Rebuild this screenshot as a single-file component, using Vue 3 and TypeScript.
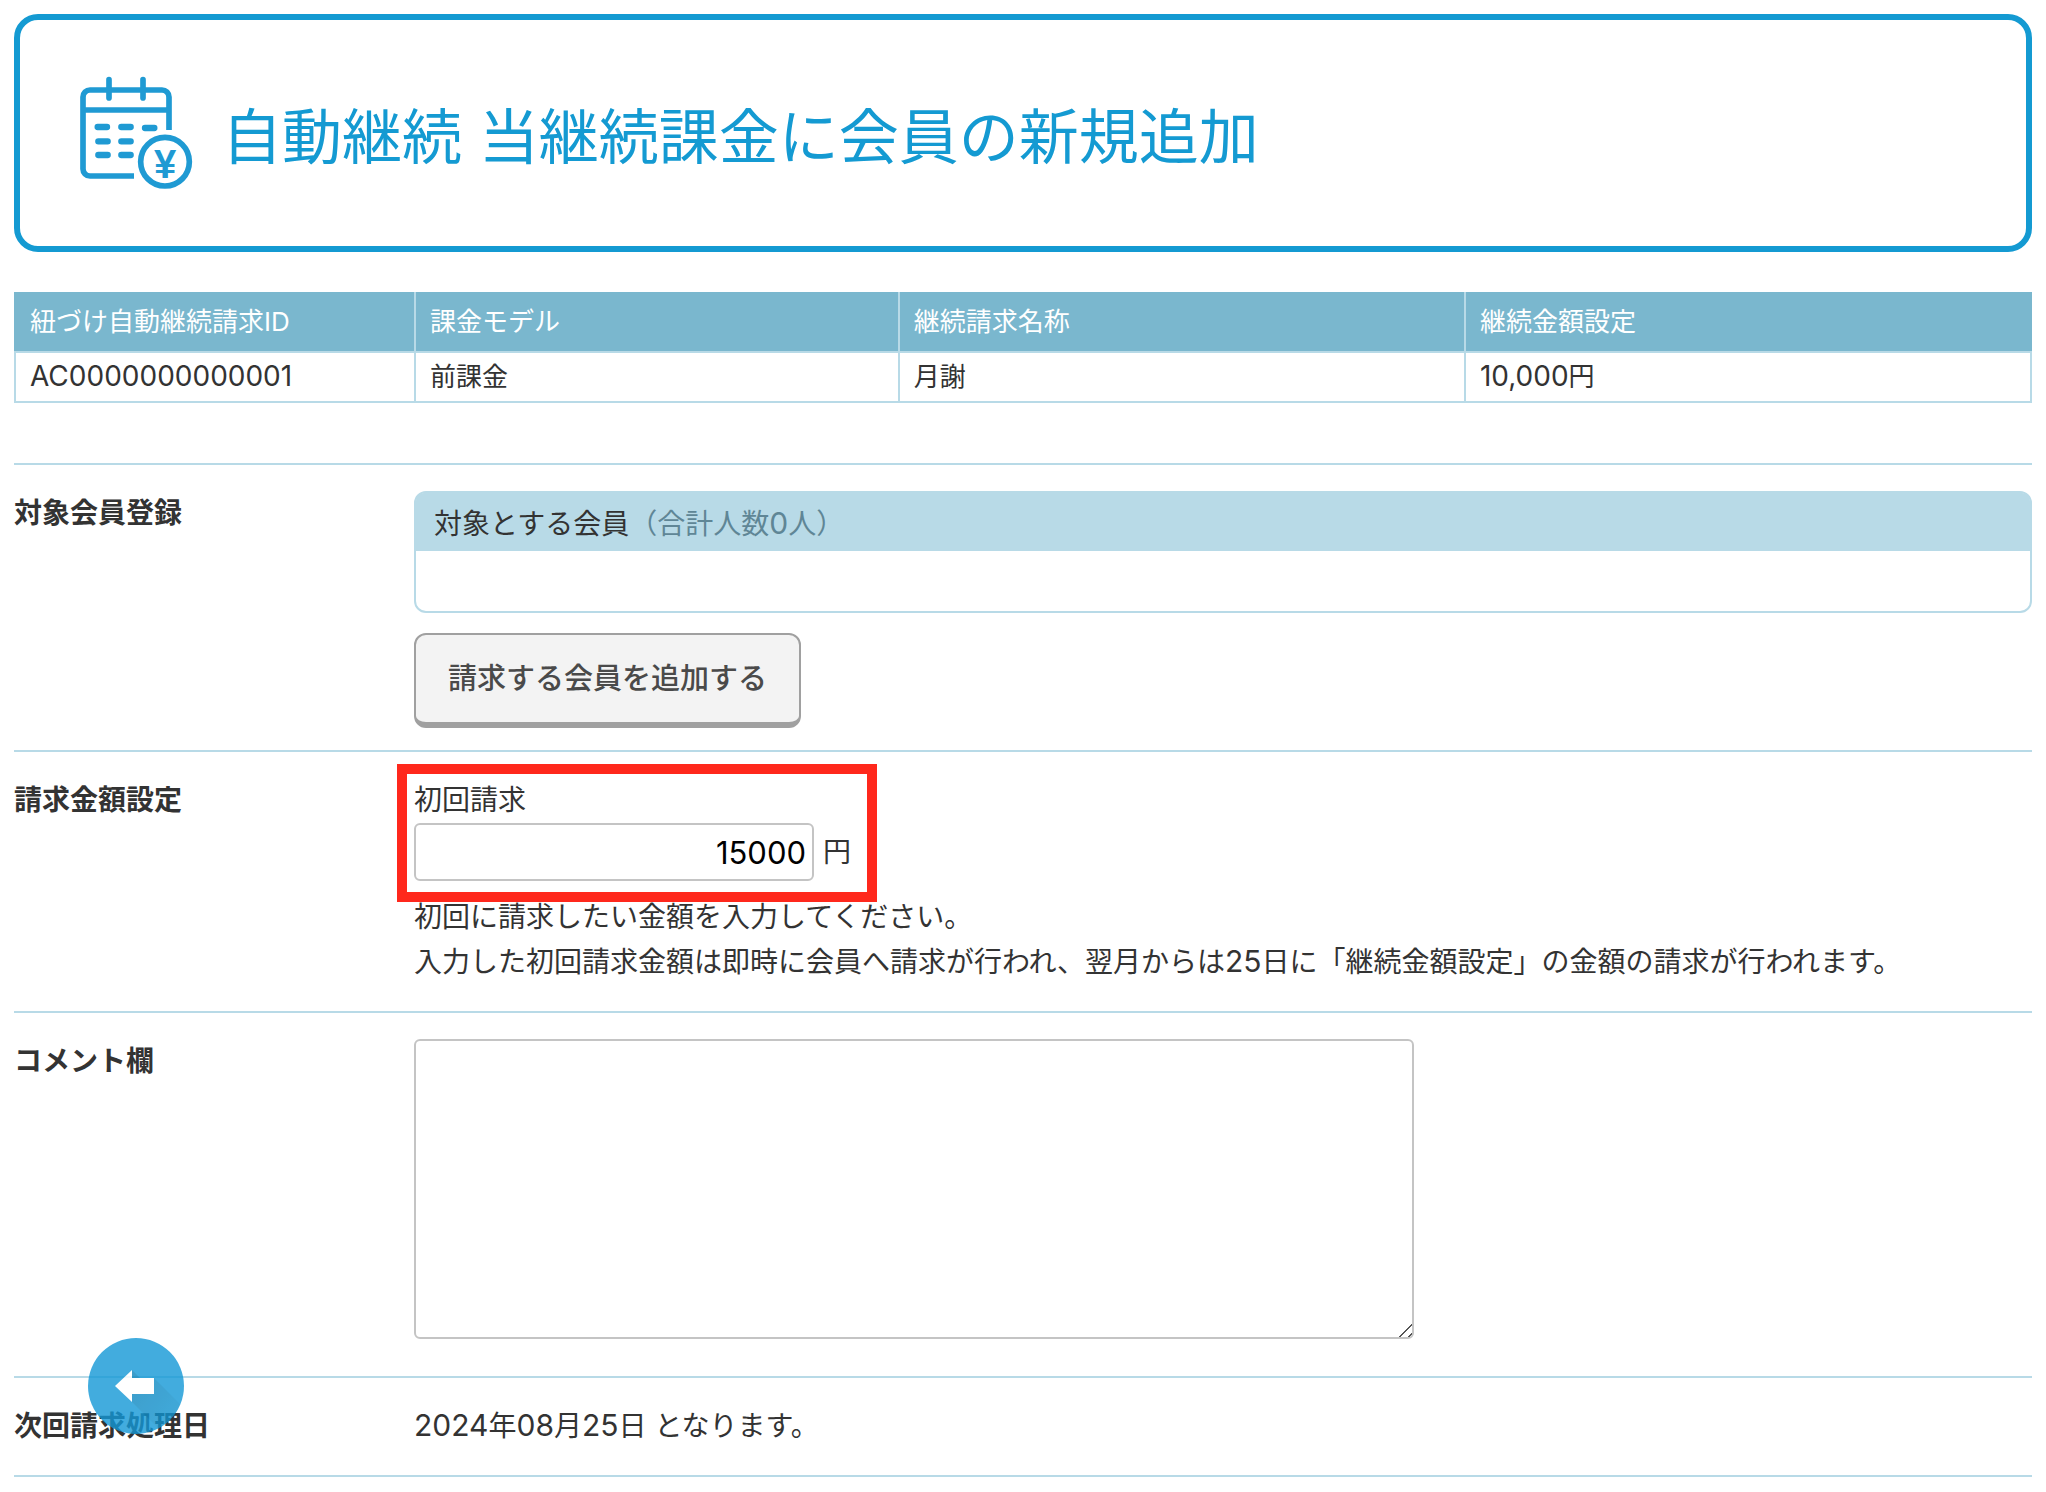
<script setup lang="ts">
import { ref } from 'vue'

interface Column {
  label: string
  number?: string
  text?: string
}

const columns: Column[] = [
  { label: '紐づけ自動継続請求ID', number: 'AC0000000000001' },
  { label: '課金モデル', text: '前課金' },
  { label: '継続請求名称', text: '月謝' },
  { label: '継続金額設定', number: '10,000', text: '円' },
]

const memberCount = ref(0)
const firstAmount = ref('15000')
const comment = ref('')
</script>

<template>
  <main class="page">
    <header class="title-box">
      <svg class="title-icon" viewBox="48 36 360 360" fill="none" stroke="#1f9ad3" stroke-width="17" aria-hidden="true">
        <path d="M327 207V108a21 21 0 0 0-21-21H90a21 21 0 0 0-21 21v216a21 21 0 0 0 21 21h132" />
        <path d="M69 147h258" />
        <path d="M147 56v55M249 56v55" stroke-linecap="round" />
        <path
          d="M113 198h28M184 198h28M255 201h28M115 241h28M184 241h28M115 282h28M184 282h28"
          stroke-width="19"
          stroke-linecap="round"
        />
        <circle cx="315" cy="302" r="73" />
        <text class="yen" x="315" y="352" text-anchor="middle">¥</text>
      </svg>
      <h1>自動継続 当継続課金に会員の新規追加</h1>
    </header>

    <table class="summary">
      <colgroup>
        <col class="col-id" />
        <col class="col-model" />
        <col />
        <col />
      </colgroup>
      <thead>
        <tr>
          <th v-for="c in columns" :key="c.label" scope="col">{{ c.label }}</th>
        </tr>
      </thead>
      <tbody>
        <tr>
          <td v-for="c in columns" :key="c.label"><span v-if="c.number" class="num">{{ c.number }}</span>{{ c.text }}</td>
        </tr>
      </tbody>
    </table>

    <form class="form" @submit.prevent>
      <section class="row row-members">
        <h2>対象会員登録</h2>
        <div class="field">
          <div class="panel">
            <p class="panel-head">対象とする会員<span class="count">（合計人数<span class="num">{{ memberCount }}</span>人）</span></p>
            <div class="panel-body"></div>
          </div>
          <button type="button" class="add">請求する会員を追加する</button>
        </div>
      </section>

      <section class="row">
        <h2>請求金額設定</h2>
        <div class="field">
          <div class="first-bill">
            <label for="first-amount">初回請求</label>
            <div class="amount">
              <input id="first-amount" v-model="firstAmount" type="text" inputmode="numeric" />
              <span>円</span>
            </div>
          </div>
          <p>
            初回に請求したい金額を入力してください。<br />
            入力した初回請求金額は即時に会員へ請求が行われ、翌月からは<span class="num">25</span>日に「継続金額設定」の金額の請求が行われます。
          </p>
        </div>
      </section>

      <section class="row row-comment">
        <h2><label for="comment">コメント欄</label></h2>
        <div class="field">
          <textarea id="comment" v-model="comment"></textarea>
        </div>
      </section>

      <section class="row">
        <h2>次回請求処理日</h2>
        <div class="field">
          <p><span class="num">2024</span>年<span class="num">08</span>月<span class="num">25</span>日 となります。</p>
        </div>
      </section>
    </form>

    <a href="#" class="back" aria-label="戻る">
      <svg viewBox="0 0 96 96" aria-hidden="true">
        <defs>
          <linearGradient id="back-shadow" x1="0" y1="0" x2="1" y2="1">
            <stop offset="0" stop-color="#0b7fb5" stop-opacity="0.8" />
            <stop offset="1" stop-color="#0b7fb5" stop-opacity="0" />
          </linearGradient>
          <clipPath id="back-clip"><circle cx="48" cy="48" r="48" /></clipPath>
        </defs>
        <circle cx="48" cy="48" r="48" fill="#1398d6" />
        <path d="M44 32l8 8h14l30 30v26H76L44 64z" fill="url(#back-shadow)" clip-path="url(#back-clip)" />
        <path d="M27 48l17-16v8h22v16H44v8z" fill="#fff" />
      </svg>
    </a>
  </main>
</template>

<style>
body {
  margin: 0;
  background: #fff;
}
</style>

<style scoped>
.page {
  padding: 14px 14px 0;
  color: #333;
  font-family: Inter, "Noto Sans CJK JP", sans-serif;
  font-size: 28px;
  line-height: 45px;
}

h1,
h2,
p {
  margin: 0;
}

.num {
  font-size: 30px;
  line-height: 1;
}

.title-box {
  display: flex;
  align-items: center;
  gap: 26px;
  padding: 53px 56px;
  border: 6px solid #149ad2;
  border-radius: 24px;
}

.title-icon {
  flex: none;
  width: 120px;
  height: 120px;
}

.yen {
  fill: #1f9ad3;
  stroke: none;
  font-family: "Liberation Sans", sans-serif;
  font-size: 120px;
  font-weight: 700;
}

h1 {
  padding-top: 8px;
  color: #149ad2;
  font-size: 60px;
  font-weight: 400;
  line-height: 80px;
}

.summary {
  width: 100%;
  margin-top: 40px;
  border-collapse: collapse;
  table-layout: fixed;
  font-size: 26px;
  line-height: 40px;
}

.summary .num {
  font-size: 28px;
}

.col-id {
  width: 400px;
}

.col-model {
  width: 24%;
}

.summary th,
.summary td {
  border: 2px solid #b8dae7;
  padding: 4px 14px;
  font-weight: 400;
  text-align: left;
}

.summary th {
  padding: 8px 14px 9px;
  border-top-color: #7ab7ce;
  background: #7ab7ce;
  color: #fff;
}

.summary th:first-child {
  border-left-color: #7ab7ce;
}

.summary th:last-child {
  border-right-color: #7ab7ce;
}

.form {
  margin-top: 60px;
  border-bottom: 2px solid #b8dae7;
}

.row {
  display: flex;
  padding: 26px 0;
  border-top: 2px solid #b8dae7;
}

.row-members {
  padding-bottom: 22px;
}

.row-comment {
  padding-bottom: 37px;
}

h2 {
  flex: none;
  width: 400px;
  font-size: 28px;
  font-weight: 700;
}

.field {
  flex: 1;
  min-width: 0;
}

.panel {
  border: 2px solid #b8dae7;
  border-radius: 12px;
}

.panel-head {
  padding: 9px 18px 4px;
  background: #b8dae7;
  border-radius: 8px 8px 0 0;
}

.count {
  color: #5f8696;
}

.panel-body {
  height: 60px;
}

.add {
  display: block;
  margin-top: 20px;
  padding: 21px 32px;
  border: 2px solid #a0a0a0;
  border-bottom-width: 6px;
  border-radius: 12px;
  background: #f3f3f3;
  color: #4a4a4a;
  font-family: inherit;
  font-size: 29px;
  font-weight: 500;
  line-height: 45px;
}

.first-bill {
  position: relative;
  width: 443px;
  margin-bottom: 14px;
}

/* Highlight frame around the first payment field */
.first-bill::after {
  content: "";
  position: absolute;
  inset: -14px -20px -21px -17px;
  border: 10px solid #ff281c;
  pointer-events: none;
}

.first-bill label {
  display: block;
}

.amount {
  display: flex;
  align-items: center;
  gap: 9px;
}

input,
textarea {
  box-sizing: border-box;
  margin: 0;
  border: 2px solid #c4c4c4;
  border-radius: 6px;
  background: #fff;
  color: #000;
  font-family: inherit;
  font-size: 31px;
}

input {
  width: 400px;
  height: 58px;
  padding: 0 6px;
  text-align: right;
}

textarea {
  display: block;
  width: 1000px;
  max-width: 100%;
  height: 300px;
  padding: 6px;
  resize: both;
}

textarea::-webkit-scrollbar {
  width: 18px;
  height: 18px;
}

textarea::-webkit-resizer {
  background: linear-gradient(
      135deg,
      transparent 45%,
      #555 46%,
      #555 51%,
      transparent 52%,
      transparent 74%,
      #555 75%,
      #555 80%,
      transparent 81%
    )
    1px 2px / 15px 15px no-repeat;
}

.back {
  position: fixed;
  bottom: 58px;
  left: 88px;
  width: 96px;
  height: 96px;
  opacity: 0.8;
}

.back svg {
  display: block;
}
</style>
